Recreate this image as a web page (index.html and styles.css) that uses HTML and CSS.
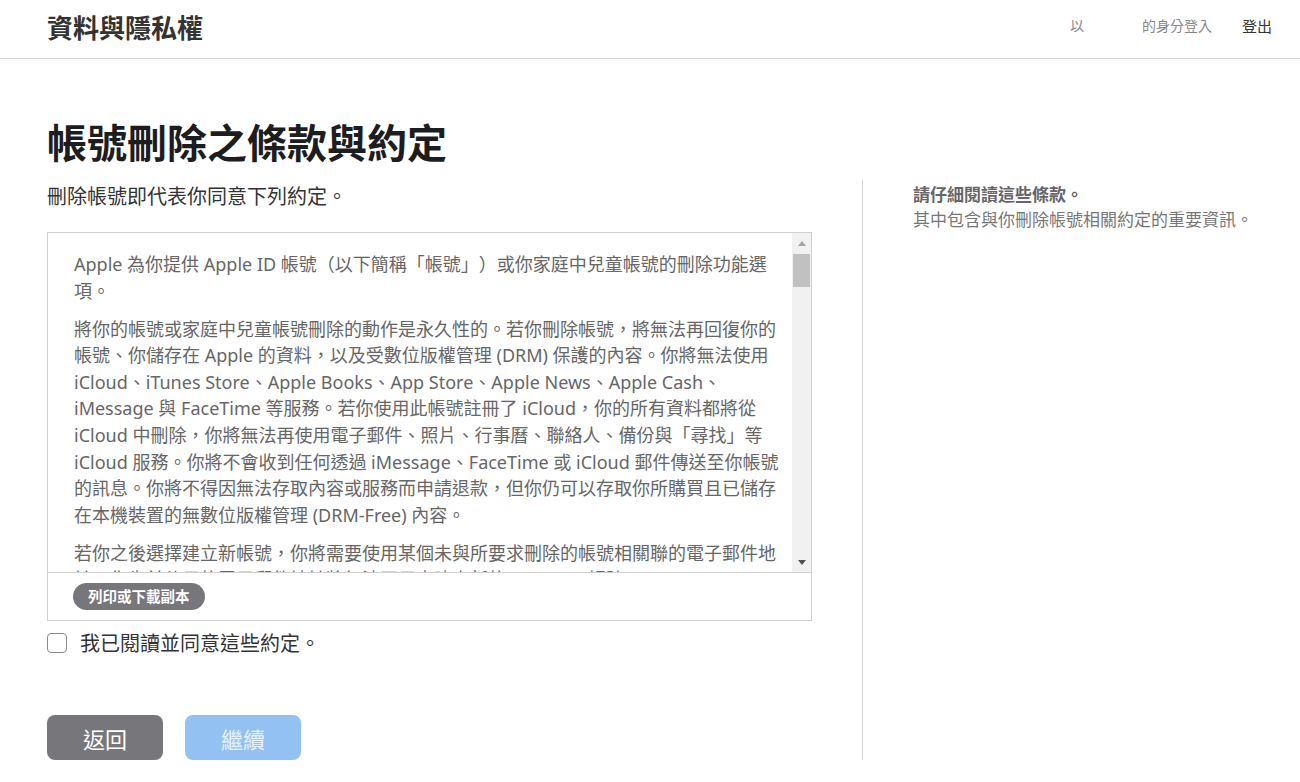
FILE: index.html
```html
<!doctype html>
<html lang="zh-Hant">
<head>
<meta charset="UTF-8">
<meta name="viewport" content="width=device-width,initial-scale=1">
<title>資料與隱私權</title>
<link rel="stylesheet" href="styles.css">
</head>
<body>

<!-- ===== HEADER ===== -->
<header class="topbar">
  <div class="brand">資料與隱私權</div>
  <div class="account">
    <span class="signed-in">以<span class="acct-name"></span>的身分登入</span>
    <a href="#" class="signout">登出</a>
  </div>
</header>

<!-- ===== MAIN ===== -->
<main class="page">
  <h1 class="page-title">帳號刪除之條款與約定</h1>

  <div class="columns">
    <section class="terms">
      <p class="lead">刪除帳號即代表你同意下列約定。</p>

      <div class="terms-box">
        <div class="terms-body">
          <div class="terms-scroll">
            <p>Apple 為你提供 Apple ID 帳號（以下簡稱「帳號」）或你家庭中兒童帳號的刪除功能選項。</p>
            <p>將你的帳號或家庭中兒童帳號刪除的動作是永久性的。若你刪除帳號，將無法再回復你的帳號、你儲存在 Apple 的資料，以及受數位版權管理 (DRM) 保護的內容。你將無法使用 iCloud、iTunes Store、Apple Books、App Store、Apple News、Apple Cash、iMessage 與 FaceTime 等服務。若你使用此帳號註冊了 iCloud，你的所有資料都將從 iCloud 中刪除，你將無法再使用電子郵件、照片、行事曆、聯絡人、備份與「尋找」等 iCloud 服務。你將不會收到任何透過 iMessage、FaceTime 或 iCloud 郵件傳送至你帳號的訊息。你將不得因無法存取內容或服務而申請退款，但你仍可以存取你所購買且已儲存在本機裝置的無數位版權管理 (DRM-Free) 內容。</p>
            <p>若你之後選擇建立新帳號，你將需要使用某個未與所要求刪除的帳號相關聯的電子郵件地址。你先前使用的電子郵件地址將無法再用來建立新的 Apple ID 帳號。</p>
          </div>
          <!-- scrollbar drawn by hand (headless hides native ones) -->
          <div class="sbar">
            <span class="sbar-up"></span>
            <span class="sbar-thumb"></span>
            <span class="sbar-down"></span>
          </div>
        </div>
        <div class="terms-foot">
          <button class="pill">列印或下載副本</button>
        </div>
      </div>

      <label class="agree">
        <span class="box"></span>
        <span>我已閱讀並同意這些約定。</span>
      </label>

      <div class="actions">
        <button class="btn btn-back">返回</button>
        <button class="btn btn-next" disabled>繼續</button>
      </div>
    </section>

    <aside class="note">
      <div class="note-title">請仔細閱讀這些條款。</div>
      <div class="note-text">其中包含與你刪除帳號相關約定的重要資訊。</div>
    </aside>
  </div>
</main>

</body>
</html>
```

FILE: styles.css
```css
/* ---- base ---- */
html,body{margin:0;padding:0}
body{
  font-family:"Noto Sans","Noto Sans CJK TC",sans-serif;
  background:#fff;color:#333;
  text-spacing-trim:space-all;
}
p{margin:0}
button{font-family:inherit;cursor:pointer}

/* ---- header ---- */
.topbar{
  height:59px;border-bottom:1px solid #d6d6d6;
  display:flex;align-items:center;justify-content:space-between;
  padding:0 28px 0 47px;box-sizing:border-box;
}
.brand{font-size:26px;font-weight:bold;color:#333;margin-top:-4px}
.account{display:flex;align-items:center;gap:30px;font-size:14px;margin-top:-8px}
.signed-in{color:#888}
.acct-name{display:inline-block;width:58px}
.signout{color:#333;text-decoration:none;font-size:15px}

/* ---- page ---- */
.page{padding:0 47px}
.page-title{
  margin:60px 0 0;font-size:40px;font-weight:bold;color:#1d1d1f;
  line-height:48px;
}
.columns{display:flex;margin-top:13px}
.terms{width:765px;flex:none;padding-top:3px}
.lead{font-size:20px;line-height:28px;color:#333;margin-bottom:21px}

/* ---- scroll box ---- */
.terms-box{border:1px solid #d0d0d0}
.terms-body{display:flex;height:339px}
.terms-scroll{
  flex:1;overflow:hidden;
  padding:18px 7px 0 26px;
  font-size:18px;line-height:26.6px;color:#666;
}
.terms-scroll p{margin-bottom:11.4px}

.sbar{width:19px;flex:none;background:#f1f1f1;display:flex;flex-direction:column;align-items:center}
.sbar-up,.sbar-down{height:20px;width:100%;display:flex;align-items:center;justify-content:center}
.sbar-up::after{content:"";border:4px solid transparent;border-top:0;border-bottom:5px solid #a3a3a3}
.sbar-down{margin-top:auto}
.sbar-down::after{content:"";border:4px solid transparent;border-bottom:0;border-top:5px solid #505050}
.sbar-thumb{width:17px;height:33px;background:#c1c1c1;margin-top:1px}

.terms-foot{border-top:1px solid #d0d0d0;height:48px;padding:10px 25px;box-sizing:border-box}
.pill{
  border:none;background:#77767b;color:#fff;
  font-size:14.5px;font-weight:bold;height:27px;padding:0 15px;border-radius:14px;
  line-height:27px;
}

/* ---- agree ---- */
.agree{display:flex;align-items:center;gap:13px;margin-top:7px;font-size:20px;color:#333}
.agree .box{
  width:18px;height:18px;border:1px solid #8a8a8a;border-radius:4px;background:#fff;
}

/* ---- buttons ---- */
.actions{display:flex;gap:22px;margin-top:58px}
.btn{
  width:116px;height:45px;border:none;border-radius:8px;
  font-size:22px;color:#fff;
}
.btn-back{background:#77767b}
.btn-next{background:#93c1f2;color:#e8f2fd}

/* ---- side note ---- */
.note{
  margin-left:50px;border-left:1px solid #d6d6d6;
  padding:0 0 0 50px;min-height:580px;
  font-size:17px;line-height:25px;color:#777;
}
.note-title{font-weight:bold;color:#666;padding-top:2px}
```
